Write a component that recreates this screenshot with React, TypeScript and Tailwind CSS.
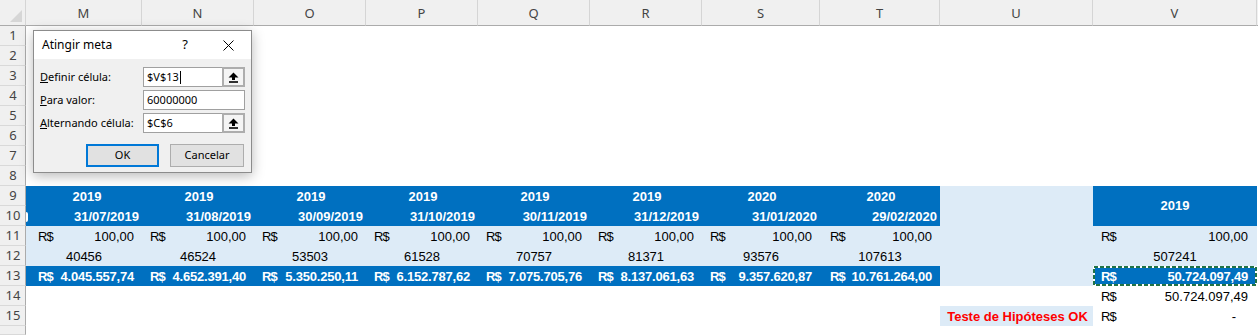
import React from "react";

const LETTERS = ["M", "N", "O", "P", "Q", "R", "S", "T", "U", "V"];

const months = [
  { y: "2019", d: "31/07/2019", n: "40456", v: "4.045.557,74" },
  { y: "2019", d: "31/08/2019", n: "46524", v: "4.652.391,40" },
  { y: "2019", d: "30/09/2019", n: "53503", v: "5.350.250,11" },
  { y: "2019", d: "31/10/2019", n: "61528", v: "6.152.787,62" },
  { y: "2019", d: "30/11/2019", n: "70757", v: "7.075.705,76" },
  { y: "2019", d: "31/12/2019", n: "81371", v: "8.137.061,63" },
  { y: "2020", d: "31/01/2020", n: "93576", v: "9.357.620,87" },
  { y: "2020", d: "29/02/2020", n: "107613", v: "10.761.264,00" },
];

// left padding of the R$ sign per column (M..T)
const padL = ["pl-[12px]", "pl-[8px]", "pl-[8px]", "pl-[8px]", "pl-[8px]", "pl-[8px]", "pl-[8px]", "pl-[10px]"];

const BLUE = "bg-[#0070C0]";
const LIGHT = "bg-[#DDEBF7]";

function RowHead({ n }: { n?: number }) {
  return (
    <div className="flex items-center justify-center pl-px bg-[#F0F0F0] border-b border-r border-b-[#D9D9D9] border-r-[#ABABAB] text-[13px] text-[#444] font-['Noto_Sans',sans-serif]">
      {n}
    </div>
  );
}

function Money({ value, bold, light, className }: { value: string; bold?: boolean; light?: boolean; className?: string }) {
  return (
    <div
      className={`flex justify-between leading-[22px] whitespace-nowrap pr-[8px] ${bold ? "font-bold text-white" : "text-black"} ${light ? LIGHT : ""} ${className ?? ""}`}
    >
      <span className="tracking-[-1px]">R$</span>
      <span className={bold ? "tracking-[-0.2px]" : ""}>{value}</span>
    </div>
  );
}

function UpArrow() {
  return (
    <svg width="11" height="11" viewBox="0 0 11 11">
      <polygon points="5.5,0.5 10.5,5.5 7,5.5 7,8 4,8 4,5.5 0.5,5.5" fill="#000" />
      <rect x="1" y="9.2" width="9" height="1.6" fill="#000" />
    </svg>
  );
}

function Field({ value, caret, refBtn }: { value: string; caret?: boolean; refBtn?: boolean }) {
  return (
    <div className="flex h-[20px] w-[102px] border border-[#A0A0A0] bg-white">
      <div className="flex-1 flex items-center pl-[3px] text-[11px] text-black">
        {value}
        {caret && <span className="ml-px h-[13px] w-px bg-black" />}
      </div>
      {refBtn && (
        <div className="-m-px w-[23px] h-[20px] flex items-center justify-center border-2 border-[#ADADAD] bg-[#F4F4F4]">
          <UpArrow />
        </div>
      )}
    </div>
  );
}

function GoalSeekDialog() {
  return (
    <div className="absolute left-[33px] top-[30px] w-[219px] h-[143px] border border-[#8C8C8C] bg-[#F0F0F0] shadow-[0_3px_12px_rgba(0,0,0,0.28)] font-['Noto_Sans',sans-serif] text-black">
      <div className="h-[28px] bg-white flex items-center pl-[8px] text-[12px]">
        <span>Atingir meta</span>
        <span className="ml-[70px] text-[13px]">?</span>
        <svg className="ml-[35px]" width="11" height="11" viewBox="0 0 11 11">
          <path d="M0.5 0.5 L10.5 10.5 M10.5 0.5 L0.5 10.5" stroke="#000" strokeWidth="1" />
        </svg>
      </div>
      <div className="pl-[6px] pt-[8px] text-[11px]">
        <div className="flex items-center">
          <span className="w-[103px]">
            <u>D</u>efinir célula:
          </span>
          <Field value="$V$13" caret refBtn />
        </div>
        <div className="flex items-center mt-[3px]">
          <span className="w-[103px]">
            <u>P</u>ara valor:
          </span>
          <Field value="60000000" />
        </div>
        <div className="flex items-center mt-[3px]">
          <span className="w-[103px]">
            <u>A</u>lternando célula:
          </span>
          <Field value="$C$6" refBtn />
        </div>
        <div className="flex mt-[11px] pl-[46px] gap-[11px]">
          <button className="w-[73px] h-[23px] border-2 border-[#0078D7] bg-[#E1E1E1] text-[11px]">OK</button>
          <button className="w-[74px] h-[23px] border border-[#ADADAD] bg-[#E1E1E1] text-[11px]">Cancelar</button>
        </div>
      </div>
    </div>
  );
}

export default function App() {
  const empty = (k: string) => <div key={k} />;
  const cells: React.ReactNode[] = [];

  // header row
  cells.push(
    <div key="corner" className="relative bg-[#F0F0F0] border-b border-r border-b-[#ABABAB] border-r-[#D5D5D5]">
      <svg className="absolute right-[3px] bottom-[3px]" width="12" height="12" viewBox="0 0 12 12">
        <polygon points="12,0 12,12 0,12" fill="#D6D6D6" />
      </svg>
    </div>
  );
  LETTERS.forEach((l) =>
    cells.push(
      <div
        key={"h" + l}
        className="flex items-center justify-center pt-[3px] bg-[#F0F0F0] border-b border-r border-b-[#ABABAB] border-r-[#D5D5D5] text-[13px] text-[#444] font-['Noto_Sans',sans-serif]"
      >
        {l}
      </div>
    )
  );
  cells.push(<div key="hf" className="bg-[#F0F0F0] border-b border-[#ABABAB]" />);

  // rows 1-8: empty (dialog sits above them)
  for (let r = 1; r <= 8; r++) {
    cells.push(<RowHead key={"rh" + r} n={r} />);
    for (let c = 0; c < 11; c++) cells.push(empty(`e${r}-${c}`));
  }

  // row 9: years
  cells.push(<RowHead key="rh9" n={9} />);
  months.forEach((m, i) =>
    cells.push(
      <div key={"y" + i} className={`${BLUE} flex justify-center leading-[22px] font-bold text-white ${i === 0 ? "pl-[6px]" : "pl-[2px]"}`}>
        {m.y}
      </div>
    )
  );
  cells.push(<div key="u9" className={`${LIGHT} row-span-5`} />);
  cells.push(
    <div key="v9" className={`${BLUE} row-span-2 flex items-center justify-center font-bold text-white`}>
      2019
    </div>
  );
  cells.push(empty("f9"));

  // row 10: dates
  cells.push(<RowHead key="rh10" n={10} />);
  months.forEach((m, i) =>
    cells.push(
      <div key={"d" + i} className={`${BLUE} relative flex justify-end pr-[3px] leading-[22px] font-bold text-white`}>
        {i === 0 && <span className="absolute left-0 top-[6px] h-[10px] w-[2px] rounded-r-full bg-white" />}
        {m.d}
      </div>
    )
  );
  cells.push(empty("f10"));

  // row 11: R$ 100,00
  cells.push(<RowHead key="rh11" n={11} />);
  months.forEach((_, i) => cells.push(<Money key={"a" + i} value="100,00" light className={padL[i]} />));
  cells.push(<Money key="v11" value="100,00" light className="pl-[8px] pr-[9px]" />);
  cells.push(empty("f11"));

  // row 12: counts
  cells.push(<RowHead key="rh12" n={12} />);
  months.forEach((m, i) =>
    cells.push(
      <div key={"n" + i} className={`${LIGHT} flex justify-center leading-[22px]`}>
        {m.n}
      </div>
    )
  );
  cells.push(
    <div key="v12" className={`${LIGHT} flex justify-center leading-[22px]`}>
      507241
    </div>
  );
  cells.push(empty("f12"));

  // row 13: totals
  cells.push(<RowHead key="rh13" n={13} />);
  months.forEach((m, i) => cells.push(<Money key={"t" + i} value={m.v} bold className={`${BLUE} ${padL[i]}`} />));
  cells.push(
    <div key="v13" className="relative">
      <Money value="50.724.097,49" bold className={`${BLUE} h-full pl-[8px] pr-[9px]`} />
      <svg className="absolute inset-0" width="164" height="20" viewBox="0 0 164 20">
        <rect x="1" y="1" width="162" height="18" fill="none" stroke="#fff" strokeWidth="2" />
        <rect x="1" y="1" width="162" height="18" fill="none" stroke="#217346" strokeWidth="2" strokeDasharray="4 2" />
      </svg>
    </div>
  );
  cells.push(empty("f13"));

  // row 14
  cells.push(<RowHead key="rh14" n={14} />);
  for (let c = 0; c < 9; c++) cells.push(empty("e14-" + c));
  cells.push(<Money key="v14" value="50.724.097,49" className="pl-[8px] pr-[9px]" />);
  cells.push(empty("f14"));

  // row 15
  cells.push(<RowHead key="rh15" n={15} />);
  for (let c = 0; c < 8; c++) cells.push(empty("e15-" + c));
  cells.push(
    <div key="u15" className={`${LIGHT} flex justify-center pl-[2px] leading-[22px] font-bold text-[#FF0000] whitespace-nowrap`}>
      Teste de Hipóteses OK
    </div>
  );
  cells.push(<Money key="v15" value="-" className="pl-[8px] pr-[21px]" />);
  cells.push(empty("f15"));

  // partial row 16
  cells.push(<RowHead key="rh16" />);

  return (
    <div className="relative w-[1258px] h-[335px] overflow-hidden bg-white">
      <div className="grid h-full grid-cols-[26px_116px_112px_112px_112px_112px_112px_118px_120px_153px_164px_1fr] grid-rows-[26px_repeat(15,20px)_1fr] text-[13px] font-['Liberation_Sans',Arial,sans-serif]">
        {cells}
      </div>
      <GoalSeekDialog />
    </div>
  );
}
